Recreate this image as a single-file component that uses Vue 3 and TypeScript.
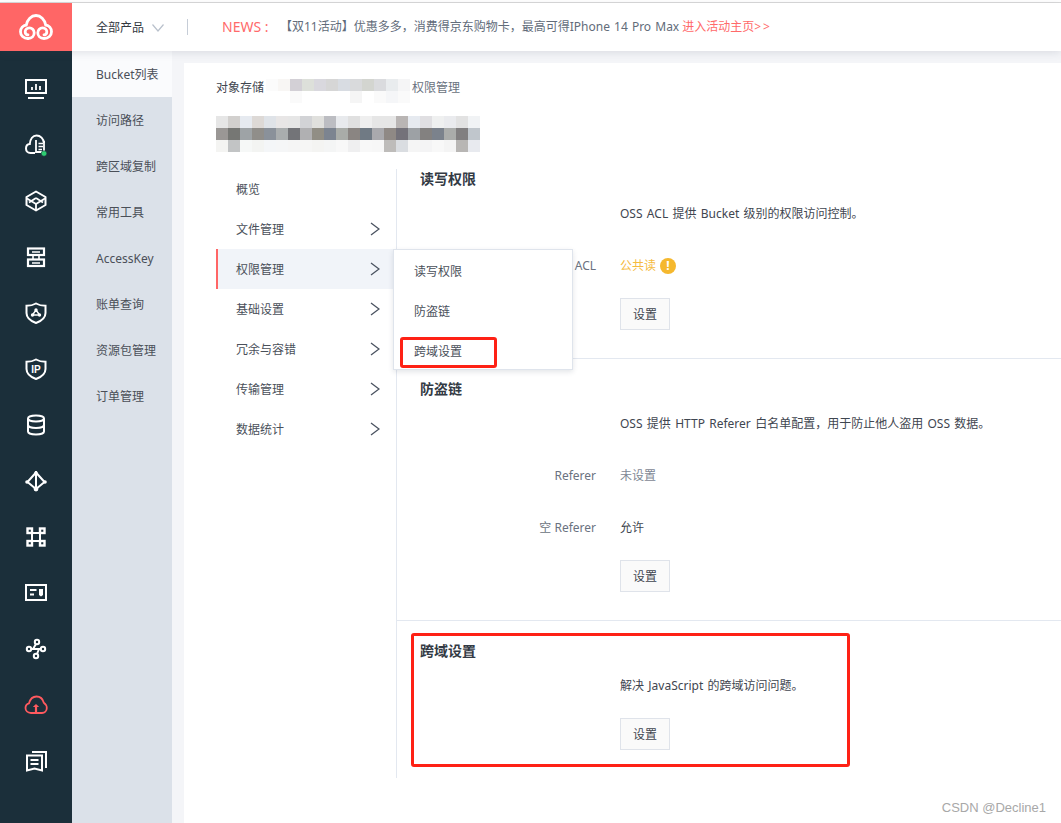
<script setup lang="ts">
const sideItems: string[] = ['Bucket列表', '访问路径', '跨区域复制', '常用工具', 'AccessKey', '账单查询', '资源包管理', '订单管理']
const menuItems: { label: string; arrow: boolean; active?: boolean }[] = [
  { label: '概览', arrow: false },
  { label: '文件管理', arrow: true },
  { label: '权限管理', arrow: true, active: true },
  { label: '基础设置', arrow: true },
  { label: '冗余与容错', arrow: true },
  { label: '传输管理', arrow: true },
  { label: '数据统计', arrow: true },
]
const crumbBlur: string[] = [
  '#fbfbfb', '#f8f6f4', '#d3d0d6', '#dde0da', '#d9d8de', '#d6d6d6', '#d8dce2', '#d9dadc', '#d3d5d0', '#dadbde', '#e9ecee', '#f5f5f6',
  '#ffffff', '#ffffff', '#fafafa', '#ffffff', '#ffffff', '#ffffff', '#ffffff', '#f5f5f5', '#ffffff', '#fafafa', '#f5f6f8', '#fafafa',
]
const titleBlur: string[] = [
  '#e6e6e6', '#d2d0ce', '#e6eaf0', '#ddd9d6', '#dfe3e8', '#e8e6e6', '#e6e6e6', '#d2d3d6', '#e0e0dd', '#bcbdc2', '#e8eaed', '#e0e0e0', '#efefef', '#e6e6e6', '#e6e6e6', '#b9b5b4', '#e6eaf0', '#e0dfe2', '#eff0f0', '#eaebee', '#e2e2e2', '#f1f3f5',
  '#9a9795', '#767774', '#9ea3a6', '#908e8a', '#8a919a', '#a9adae', '#737478', '#b0b0b2', '#918e85', '#7c8490', '#a9aca8', '#8a8582', '#707a84', '#a9a9ad', '#8f8985', '#74727a', '#9da1a5', '#838180', '#7b828c', '#aaacaa', '#817f80', '#c0c6cc',
  '#f4f4f2', '#c2c4c5', '#f6f8f7', '#f3f4f2', '#f4f6f8', '#f5f6f7', '#f5f5f5', '#f6f6f5', '#f4f4f2', '#f4f5f5', '#f8f8f8', '#efeff0', '#f8f8f8', '#f7f7f7', '#bebcba', '#dadde1', '#f5f5f5', '#f4f4f5', '#f8f8f8', '#f4f4f4', '#b8b6b4', '#e8eaef',
]
</script>

<template>
  <div class="page">
    <header class="top">
      <div class="logo">
        <svg width="34" height="26" viewBox="0 0 34 26" fill="none" stroke="#fff" stroke-width="2.8" stroke-linecap="round">
          <path d="M9 24.5C4.5 24.5 1.5 21.5 1.5 17.8C1.5 14.2 4 11.5 7.3 11C8.3 5.5 12.3 1.5 17 1.5C21.7 1.5 25.7 5.5 26.7 11C30 11.5 32.5 14.2 32.5 17.8C32.5 21.5 29.5 24.5 25 24.5C21 24.5 18.8 21.8 18.8 18.8C18.8 15.8 21 13.8 23.6 13.8C26 13.8 27.8 15.5 27.8 17.8C27.8 19.6 26.5 20.8 25 20.8" />
          <path d="M9 24.5C13 24.5 15.2 21.8 15.2 18.8C15.2 15.8 13 13.8 10.4 13.8C8 13.8 6.2 15.5 6.2 17.8C6.2 19.6 7.5 20.8 9 20.8" />
        </svg>
      </div>
      <div class="products">
        <span>全部产品</span>
        <svg width="12" height="8" viewBox="0 0 12 8" fill="none" stroke="#b9c1cc" stroke-width="1.2"><path d="M0.5 0.5L6 7L11.5 0.5" /></svg>
      </div>
      <div class="vline"></div>
      <div class="news">
        <span class="news-tag">NEWS :</span>
        <span class="news-text">【双11活动】优惠多多，消费得京东购物卡，最高可得IPhone 14 Pro Max</span>
        <span class="news-link">进入活动主页<span class="gt">&gt;&gt;</span></span>
      </div>
    </header>

    <div class="main">
      <nav class="rail">
        <div class="rail-item">
          <svg width="24" height="24" viewBox="0 0 24 24" fill="none" stroke="#fff" stroke-width="2"><rect x="2" y="3" width="20" height="13" /><path d="M4 21H20" /><path d="M8 13V10M12 13V7M16 13V9" stroke-width="1.8" /></svg>
        </div>
        <div class="rail-item">
          <svg width="24" height="24" viewBox="0 0 24 24" fill="none" stroke="#fff" stroke-width="2"><path d="M11 20H6.5C3.5 20 2 17.8 2 15.5C2 13 3.8 11.2 5.8 11C6.2 6 8.8 2.5 12.5 2.5C16.5 2.5 19.5 5.8 20 10" /><path d="M12 7V19H20V8" stroke-width="1.8" /><path d="M14.5 10.5H19M14.5 13.5H19M14.5 16.5H18" stroke-width="1.5" /><circle cx="20" cy="20.5" r="2.8" fill="#2ecc71" stroke="#1b2f3a" stroke-width="0.6" /></svg>
        </div>
        <div class="rail-item">
          <svg width="24" height="24" viewBox="0 0 24 24" fill="none" stroke="#fff" stroke-width="2" stroke-linejoin="round"><path d="M12 2.5L21.5 8V16L12 21.5L2.5 16V8Z" /><path d="M3 9.5L12 15L21 9.5M12 9L5 13.5M12 9L19 13.5M12 15V21" stroke-width="1.8" /></svg>
        </div>
        <div class="rail-item">
          <svg width="24" height="24" viewBox="0 0 24 24" fill="none" stroke="#fff" stroke-width="2.2"><rect x="4" y="3.5" width="16" height="6.5" /><rect x="4" y="14.5" width="16" height="6.5" /><path d="M9 10V14.5M15 10V14.5" stroke-width="1.6" /><path d="M8 7H16M8 18H16" stroke-width="1.4" /></svg>
        </div>
        <div class="rail-item">
          <svg width="24" height="24" viewBox="0 0 24 24" fill="none" stroke="#fff" stroke-width="2"><path d="M12 2.5C15 4.2 18 4.8 21.5 4.8V12C21.5 17 17.5 20 12 22C6.5 20 2.5 17 2.5 12V4.8C6 4.8 9 4.2 12 2.5Z" /><path d="M12 9L8.5 14H15.5Z" stroke-width="1.4" stroke-linejoin="round" /><circle cx="12" cy="9" r="1.7" fill="#fff" stroke="none" /><circle cx="8.5" cy="14" r="1.7" fill="#fff" stroke="none" /><circle cx="15.5" cy="14" r="1.7" fill="#fff" stroke="none" /></svg>
        </div>
        <div class="rail-item">
          <svg width="24" height="24" viewBox="0 0 24 24" fill="none" stroke="#fff" stroke-width="2"><path d="M12 2.5C15 4.2 18 4.8 21.5 4.8V12C21.5 17 17.5 20 12 22C6.5 20 2.5 17 2.5 12V4.8C6 4.8 9 4.2 12 2.5Z" /><text x="12" y="15.5" text-anchor="middle" class="ip" fill="#fff" stroke="none">IP</text></svg>
        </div>
        <div class="rail-item">
          <svg width="24" height="24" viewBox="0 0 24 24" fill="none" stroke="#fff" stroke-width="2"><ellipse cx="12" cy="5.5" rx="8" ry="3" /><path d="M4 5.5V18.5C4 20.2 7.6 21.5 12 21.5C16.4 21.5 20 20.2 20 18.5V5.5" /><path d="M4 12C4 13.7 7.6 15 12 15C16.4 15 20 13.7 20 12" /></svg>
        </div>
        <div class="rail-item">
          <svg width="24" height="24" viewBox="0 0 24 24" fill="none" stroke="#fff" stroke-width="2" stroke-linejoin="round"><path d="M12 3.5L20.5 13L12 20L3.5 13Z" /><path d="M12 2V22" /><circle cx="12" cy="4" r="1.8" fill="#fff" stroke="none" /><circle cx="3" cy="13" r="1.8" fill="#fff" stroke="none" /><circle cx="21" cy="13" r="1.8" fill="#fff" stroke="none" /><circle cx="12" cy="20" r="2.4" fill="#fff" stroke="none" /></svg>
        </div>
        <div class="rail-item">
          <svg width="24" height="24" viewBox="0 0 24 24" fill="none" stroke="#fff" stroke-width="2.4"><rect x="3.5" y="3.5" width="4.5" height="4.5" /><rect x="16" y="3.5" width="4.5" height="4.5" /><rect x="3.5" y="16" width="4.5" height="4.5" /><rect x="16" y="16" width="4.5" height="4.5" /><path d="M8 8H16V16H8Z" stroke-width="2" /></svg>
        </div>
        <div class="rail-item">
          <svg width="24" height="24" viewBox="0 0 24 24" fill="none" stroke="#fff" stroke-width="2"><rect x="2" y="4" width="20" height="15" /><path d="M6 9H12.5M6 13.5H10" /><path d="M15 8H19V14L17 15.5L15 14Z" fill="#fff" stroke="none" /></svg>
        </div>
        <div class="rail-item">
          <svg width="24" height="24" viewBox="0 0 24 24" fill="none" stroke="#fff" stroke-width="2"><circle cx="13" cy="5" r="2.2" /><circle cx="5" cy="12" r="2.2" /><circle cx="19" cy="12" r="2.2" /><circle cx="12" cy="19" r="2.2" /><path d="M7 12H17M12 7L9 12M15 12L13 17" /></svg>
        </div>
        <div class="rail-item">
          <svg width="24" height="24" viewBox="0 0 24 24" fill="none" stroke="#ff5a5f" stroke-width="1.8"><path d="M7 20C3.5 20 1.5 17.5 1.5 15C1.5 12.5 3.2 10.8 5 10.3C6.2 6 9 3.5 12.5 3.5C16.5 3.5 19 6.5 19.8 9.8C21.5 11 22.8 12.7 22.8 15C22.8 18 20.5 20 18 20Z" /><path d="M12 20V12.5" stroke-width="2.2" /><path d="M8.8 14L12 11L15.2 14Z" fill="#ff5a5f" stroke="none" /></svg>
        </div>
        <div class="rail-item">
          <svg width="24" height="24" viewBox="0 0 24 24" fill="none" stroke="#fff" stroke-width="2"><path d="M8 3H22V19" /><path d="M3 6.5H18V21.5L10.5 19.5L3 21.5Z" /><path d="M6.5 11H14.5M6.5 15H14.5" stroke-width="1.8" /></svg>
        </div>
      </nav>

      <aside class="subnav">
        <div v-for="(item, i) in sideItems" :key="item" class="sub-item" :class="{ on: i === 0 }">{{ item }}</div>
      </aside>

      <section class="stage">
        <div class="card">
          <div class="crumb">
            <span>对象存储</span>
            <div class="crumb-blur">
              <i v-for="(c, i) in crumbBlur" :key="i" :style="{ background: c }"></i>
            </div>
            <span class="crumb-last">权限管理</span>
          </div>
          <div class="title-blur">
            <i v-for="(c, i) in titleBlur" :key="i" :style="{ background: c }"></i>
          </div>

          <div class="body">
            <div class="menu">
              <div v-for="m in menuItems" :key="m.label" class="menu-item" :class="{ active: m.active }">
                <span>{{ m.label }}</span>
                <svg v-if="m.arrow" width="10" height="14" viewBox="0 0 10 14" fill="none" stroke="#4a5260" stroke-width="1.3"><path d="M1 1L9 7L1 13" /></svg>
              </div>
              <div class="flyout">
                <div class="fly-item">读写权限</div>
                <div class="fly-item">防盗链</div>
                <div class="fly-item">跨域设置</div>
                <div class="mark mark-small"></div>
              </div>
            </div>

            <div class="content">
              <div class="sec first">
                <h3>读写权限</h3>
                <div class="row"><span></span><span class="desc">OSS ACL 提供 Bucket 级别的权限访问控制。</span></div>
                <div class="row gap">
                  <span class="lab">Bucket ACL</span>
                  <span class="warn">公共读<b class="bang">!</b></span>
                </div>
                <div class="row btn-row"><span></span><button class="btn">设置</button></div>
              </div>
              <div class="sec">
                <h3>防盗链</h3>
                <div class="row"><span></span><span class="desc">OSS 提供 HTTP Referer 白名单配置，用于防止他人盗用 OSS 数据。</span></div>
                <div class="row gap"><span class="lab">Referer</span><span class="muted">未设置</span></div>
                <div class="row gap"><span class="lab">空 Referer</span><span>允许</span></div>
                <div class="row btn-row"><span></span><button class="btn">设置</button></div>
              </div>
              <div class="sec last">
                <h3>跨域设置</h3>
                <div class="row"><span></span><span class="desc">解决 JavaScript 的跨域访问问题。</span></div>
                <div class="row btn-row"><span></span><button class="btn">设置</button></div>
                <div class="mark mark-big"></div>
              </div>
            </div>
          </div>
        </div>
      </section>
    </div>
    <div class="watermark">CSDN @Decline1</div>
  </div>
</template>

<style>
html, body { margin: 0; padding: 0; background: #fff; }
</style>

<style scoped>
.page {
  position: relative;
  width: 1061px;
  height: 823px;
  overflow: hidden;
  display: flex;
  flex-direction: column;
  box-sizing: border-box;
  padding-top: 3px;
  background: #fff;
  font-family: "Noto Sans", "Noto Sans CJK SC", sans-serif;
  font-size: 12px;
  line-height: 20px;
  color: #3f4650;
}
.page::before {
  content: "";
  position: absolute;
  left: 0;
  right: 0;
  top: 2px;
  height: 1px;
  background: #d9d9d9;
}
.top {
  position: relative;
  z-index: 2;
  height: 48px;
  flex: none;
  display: flex;
  align-items: center;
  background: #fff;
  box-shadow: 0 2px 8px rgba(60, 70, 90, 0.13);
}
.logo {
  width: 72px;
  height: 48px;
  flex: none;
  background: #ff6666;
  display: flex;
  align-items: center;
  justify-content: center;
}
.products {
  margin-left: 24px;
  width: 91px;
  flex: none;
  display: flex;
  align-items: center;
  gap: 8px;
  color: #33383f;
  padding-top: 2px;
}
.vline { width: 1px; height: 16px; background: #c6cdd7; flex: none; }
.news { margin-left: 34px; display: flex; align-items: center; white-space: nowrap; }
.news-tag { font-size: 14px; color: #ff6a6a; width: 58px; flex: none; margin-top: -1px; }
.news-text { color: #626c7a; word-spacing: 1px; }
.news-link { color: #ff6a6a; margin-left: 3px; }
.gt { letter-spacing: 2px; }

.main { flex: 1; min-height: 0; display: flex; }
.rail {
  width: 72px;
  flex: none;
  background: #1b2f3a;
  padding-top: 10px;
  box-sizing: border-box;
}
.rail-item { height: 56px; display: flex; align-items: center; justify-content: center; }
.ip { font: 700 10px "Liberation Sans", sans-serif; }
.subnav { width: 100px; flex: none; background: #dbe1e9; }
.sub-item {
  height: 46px;
  padding-left: 24px;
  line-height: 48px;
  color: #4a4f58;
}
.sub-item.on { background: #fafbfd; }
.stage { flex: 1; min-width: 0; background: #f4f5f8; padding: 12px 0 0 12px; }
.card {
  height: 100%;
  background: #fff;
  padding: 14px 0 0 32px;
  box-sizing: border-box;
}
.crumb { display: flex; align-items: flex-start; height: 39px; }
.crumb > span { line-height: 22px; color: #3f4650; }
.crumb-blur {
  margin: 2px 2px 0 2px;
  width: 144px;
  display: grid;
  grid-template-columns: repeat(12, 12px);
  grid-auto-rows: 12px;
  flex: none;
}
.crumb-last.crumb-last { color: #6a7280; }
.title-blur {
  display: grid;
  grid-template-columns: repeat(22, 12px);
  grid-auto-rows: 12px;
  width: 264px;
}
.crumb-blur i, .title-blur i { display: block; }
.body { display: flex; margin-top: 17px; }
.menu { position: relative; width: 180px; flex: none; }
.menu-item {
  height: 40px;
  padding: 2px 16px 0 20px;
  display: flex;
  align-items: center;
  justify-content: space-between;
  box-sizing: border-box;
  color: #4a505a;
}
.menu-item svg { margin-top: -2px; }
.menu-item.active {
  background: #f1f4f9;
  border-left: 2px solid #ff6666;
  padding-left: 18px;
}
.flyout {
  position: absolute;
  z-index: 3;
  left: 177px;
  top: 80px;
  width: 180px;
  height: 121px;
  box-sizing: border-box;
  background: #fff;
  border: 1px solid #dfe4ec;
  box-shadow: 0 2px 5px rgba(60, 70, 90, 0.14);
  padding-left: 20px;
  color: #4a505a;
}
.fly-item { height: 40px; line-height: 44px; }
.content { flex: 1; min-width: 0; border-left: 1px solid #e3e8f0; }
.sec {
  position: relative;
  padding: 20px 0 28px 23px;
  border-bottom: 1px solid #e3e8f0;
}
.sec.first { padding-top: 0; }
.sec.last { border-bottom: none; }
h3 {
  margin: 0;
  font-size: 14px;
  font-weight: 700;
  line-height: 20px;
  color: #333a44;
}
.row {
  display: grid;
  grid-template-columns: 176px 1fr;
  column-gap: 24px;
  margin-top: 14px;
  height: 20px;
  line-height: 22px;
  align-items: start;
  color: #3f4650;
}
.row.gap { margin-top: 32px; }
.row.btn-row { margin-top: 23px; height: 32px; line-height: 20px; }
.desc { word-spacing: 1.2px; }
.lab { text-align: right; color: #6a7280; }
.muted { color: #7e8794; }
.warn { color: #f5bb3f; display: flex; align-items: center; gap: 4px; }
.bang {
  width: 16px;
  height: 16px;
  border-radius: 50%;
  background: #f5b82e;
  color: #fff;
  font-size: 12px;
  line-height: 16px;
  text-align: center;
  font-weight: 700;
}
.btn {
  width: 50px;
  height: 32px;
  padding: 2px 0 0;
  box-sizing: border-box;
  background: #fafafa;
  border: 1px solid #dfe3ea;
  font: inherit;
  color: #3f4650;
}
.mark {
  position: absolute;
  box-sizing: border-box;
  border: 3px solid #fe2115;
  border-radius: 3px;
  pointer-events: none;
}
.mark-small { left: 6px; top: 87px; width: 97px; height: 31px; }
.mark-big { left: 14px; top: 12px; width: 439px; height: 134px; }
.watermark {
  position: absolute;
  right: 15px;
  bottom: 5px;
  font-size: 13px;
  color: #a8a8a8;
  font-family: "Liberation Sans", sans-serif;
}
</style>
